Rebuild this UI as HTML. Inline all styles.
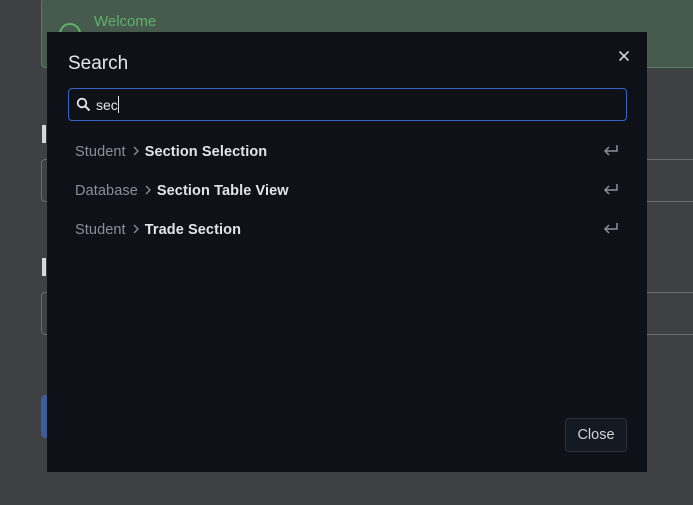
<!DOCTYPE html>
<html><head><meta charset="utf-8"><style>
*{box-sizing:border-box;margin:0;padding:0}
body{width:693px;height:505px;background:#3e4043;position:relative;overflow:hidden;font-family:"Liberation Sans",sans-serif}
.banner{position:absolute;left:41px;top:-2px;width:660px;height:70px;background:#465a4d;border:1px solid #5a7a5e;border-radius:4px}
.banner span{position:absolute;left:52px;top:14px;color:#5fb26a;font-size:15px}
.circ{position:absolute;left:17px;top:24px;width:22px;height:22px;border:2px solid #5fb26a;border-radius:50%}
.hbar{position:absolute;left:42px;width:4px;height:18px;background:#d8d8d8}
.inp{position:absolute;left:41px;width:700px;height:43px;border:1px solid #6a6c70;border-radius:4px}
.btn{position:absolute;left:41px;top:395px;width:30px;height:43px;background:#3d5c98;border-radius:4px}
.modal{position:absolute;left:47px;top:32px;width:600px;height:440px;background:#0e1118}
.title{position:absolute;left:21px;top:21px;color:#e4e6ea;font-size:19px}
.x{position:absolute;left:570px;top:17px}
.search{position:absolute;left:21px;top:56px;width:559px;height:33px;border:1.5px solid #3b64c8;border-radius:4px}
.search .q{position:absolute;left:27px;top:7px;color:#e4e6ea;font-size:14px}
.cur{display:inline-block;width:1px;height:17px;background:#e4e6ea;vertical-align:-3px}
.row{position:absolute;left:28px;font-size:14.5px;color:#8b8f97;letter-spacing:0.1px}
.row b{color:#e2e4e8;margin-left:2px}
.chev{display:inline-block;margin:0 3px 0 6px;vertical-align:0}
.ent{position:absolute;left:556px}
.close{position:absolute;left:518px;top:386px;width:62px;height:34px;border:1px solid #2c3039;border-radius:4px;background:#141820;color:#d0d3d8;font-size:14.5px;text-align:center;line-height:33px}
</style></head><body>
<div class="banner"><div class="circ"></div><span>Welcome</span></div>
<div class="hbar" style="top:125px"></div>
<div class="inp" style="top:159px"></div>
<div class="hbar" style="top:258px"></div>
<div class="inp" style="top:292px"></div>
<div class="btn"></div>
<div class="modal">
<div class="title">Search</div>
<svg class="x" width="14" height="14" viewBox="0 0 14 14"><path d="M2.5 2.5L11.5 11.5M11.5 2.5L2.5 11.5" stroke="#e4e6ea" stroke-width="1.5"/></svg>
<div class="search">
<svg style="position:absolute;left:7px;top:8px" width="15" height="15" viewBox="0 0 15 15"><circle cx="6" cy="6" r="4.3" fill="none" stroke="#e4e6ea" stroke-width="1.8"/><path d="M9.2 9.2L13.5 13.5" stroke="#e4e6ea" stroke-width="2"/></svg>
<span class="q">sec<span class="cur"></span></span></div>
<div class="row" style="top:112px">Student<svg class="chev" width="8" height="10" viewBox="0 0 8 10"><path d="M2 1L6 5L2 9" fill="none" stroke="#8b8f97" stroke-width="1.3"/></svg><b>Section Selection</b></div>
<div class="row" style="top:151px">Database<svg class="chev" width="8" height="10" viewBox="0 0 8 10"><path d="M2 1L6 5L2 9" fill="none" stroke="#8b8f97" stroke-width="1.3"/></svg><b>Section Table View</b></div>
<div class="row" style="top:190px">Student<svg class="chev" width="8" height="10" viewBox="0 0 8 10"><path d="M2 1L6 5L2 9" fill="none" stroke="#8b8f97" stroke-width="1.3"/></svg><b>Trade Section</b></div>
<svg class="ent" style="top:112px" width="16" height="12" viewBox="0 0 16 12"><path d="M14 1V7H2M6 3L2 7L6 11" fill="none" stroke="#8b8f97" stroke-width="1.5"/></svg>
<svg class="ent" style="top:151px" width="16" height="12" viewBox="0 0 16 12"><path d="M14 1V7H2M6 3L2 7L6 11" fill="none" stroke="#8b8f97" stroke-width="1.5"/></svg>
<svg class="ent" style="top:190px" width="16" height="12" viewBox="0 0 16 12"><path d="M14 1V7H2M6 3L2 7L6 11" fill="none" stroke="#8b8f97" stroke-width="1.5"/></svg>
<div class="close">Close</div>
</div>
</body></html>
